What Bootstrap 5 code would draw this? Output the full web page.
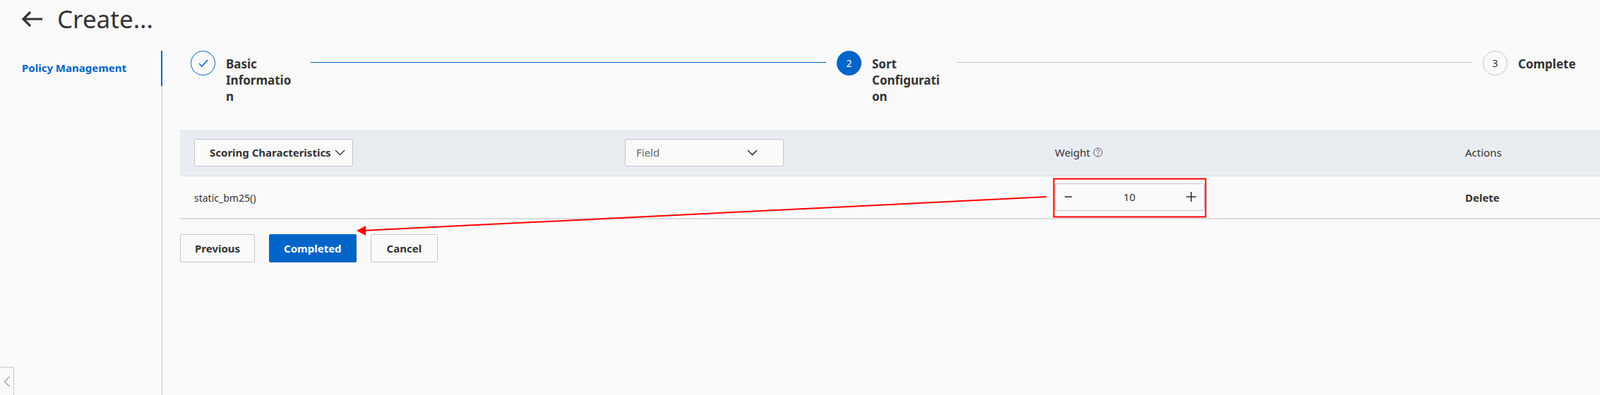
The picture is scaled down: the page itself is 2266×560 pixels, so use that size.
<!DOCTYPE html>
<html lang="en">

<head>
    <meta charset="UTF-8">
    <meta name="viewport" content="width=device-width, initial-scale=1.0">
    <title>Create</title>
    <link href="https://cdn.jsdelivr.net/npm/bootstrap@5.3.0/dist/css/bootstrap.min.css" rel="stylesheet">
    <style>
        html, body { height: 100%; overflow: hidden; }
        body { background: #fafafa; color: #333; font-family: "Noto Sans", "Open Sans", sans-serif; font-size: 15px; }
        .page-wrap { width: 2266px; height: 560px; position: relative; }
        .page-head { height: 72px; padding: 0 0 19px 30px; gap: 21px; }
        .page-head svg { display: block; }
        .page-title { font-size: 35px; line-height: 40px; font-weight: 400; margin: 0; color: #333; }
        .side-menu { width: 230px; height: 488px; border-right: 1px solid #c4c6cf; position: relative; flex: none; padding: 12px 0 0 31px; font-weight: 700; color: #0064c8; line-height: 24px; }
        .side-menu::after { content: ""; position: absolute; right: -1px; top: 0; width: 2px; height: 50px; background: #0064c8; }
        .main-area { flex: 1; min-width: 0; padding-left: 25px; }
        .steps { padding-left: 15px; height: 112px; }
        .step-dot { width: 35px; height: 35px; border-radius: 50%; border: 1px solid #c4c6cf; flex: none; font-size: 14px; }
        .step-done { border-color: #0064c8; color: #0064c8; }
        .step-now { background: #0064c8; border-color: #0064c8; color: #fff; }
        .step-name { width: 100px; margin: 0 20px 0 15px; font-size: 17px; line-height: 23px; font-weight: 700; padding-top: 7px; overflow-wrap: break-word; flex: none; }
        .step-name-last { width: auto; }
        .step-line { width: 730px; height: 1px; background: #c4c6cf; margin-top: 16px; flex: none; }
        .step-line-on { background: #0064c8; }
        .step-gap { margin-right: 15px; }
        .sort-table { width: 2011px; table-layout: fixed; margin: 0; border-collapse: collapse; }
        .sort-table th { background: #e9edf2; font-weight: 400; height: 65px; padding: 0 0 0 20px; vertical-align: middle; border-bottom: 1px solid #dcdfe4; color: #333; }
        .sort-table td { height: 61px; padding: 0 0 0 20px; vertical-align: middle; background: transparent; border-bottom: 2px solid #dcdcdc; color: #333; }
        .sort-table td.cell-text { padding-top: 2px; }
        .fn-name { font-size: 14px; }
        .pick-box { height: 39px; background: #fafafa; border: 1px solid #c4c6cf; border-radius: 2px; font-size: 15px; color: #333; padding: 0; }
        .pick-sort { width: 225px; padding-left: 21px; font-weight: 700; gap: 5px; white-space: nowrap; }
        .pick-field { width: 225px; padding: 0 36px 0 15px; color: #666; justify-content: space-between; }
        .num-box { width: 212px; height: 39px; border: 1px solid #c4c6cf; border-radius: 2px; padding: 0 11px 0 12px; }
        .help-mark { margin-left: 4px; vertical-align: -1px; }
        .btn-row { padding-top: 21px; gap: 20px; }
        .act-btn { height: 40px; border-radius: 2px; font-size: 15px; font-weight: 700; padding: 0 20px; background: #fafafa; border: 1px solid #c4c6cf; color: #333; }
        .act-cancel { padding: 0 22px; }
        .act-primary { background: #0064c8; border-color: #0064c8; color: #fff; }
        .side-toggle { position: absolute; left: 0; bottom: 0; width: 20px; height: 40px; border: 1px solid #c4c6cf; border-left: 0; border-bottom: 0; border-radius: 0 2px 0 0; }
        .mark-layer { position: absolute; left: 0; top: 0; pointer-events: none; }
    </style>
</head>

<body>
    <div class="page-wrap">
        <div class="page-head d-flex align-items-center">
            <svg width="30" height="22" viewBox="0 0 30 22" fill="none" stroke="#333" stroke-width="3.200">
                <path d="M30 11H3M13 1L3 11l10 10" />
            </svg>
            <h1 class="page-title">Create...</h1>
        </div>

        <div class="d-flex">
            <div class="side-menu">Policy Management</div>

            <div class="main-area">
                <div class="steps d-flex">
                    <div class="step-dot step-done d-flex align-items-center justify-content-center">
                        <svg width="14" height="11" viewBox="0 0 14 11" fill="none" stroke="#0064c8" stroke-width="1.6">
                            <path d="M1 6l4 4 8-9" />
                        </svg>
                    </div>
                    <div class="step-name">Basic Information</div>
                    <div class="step-line step-line-on step-gap"></div>
                    <div class="step-dot step-now d-flex align-items-center justify-content-center">2</div>
                    <div class="step-name">Sort Configuration</div>
                    <div class="step-line step-gap"></div>
                    <div class="step-dot d-flex align-items-center justify-content-center">3</div>
                    <div class="step-name step-name-last">Complete</div>
                </div>

                <table class="table sort-table">
                    <colgroup>
                        <col style="width: 610px">
                        <col style="width: 609px">
                        <col style="width: 581px">
                        <col style="width: 211px">
                    </colgroup>
                    <thead>
                        <tr>
                            <th>
                                <button class="pick-box pick-sort d-flex align-items-center" type="button">
                                    Scoring Characteristics
                                    <svg width="15" height="9" viewBox="0 0 15 9" fill="none" stroke="#333" stroke-width="1.4">
                                        <path d="M1 1l6.500 6.500L14 1" />
                                    </svg>
                                </button>
                            </th>
                            <th>
                                <button class="pick-box pick-field d-flex align-items-center" type="button">
                                    Field
                                    <svg width="15" height="9" viewBox="0 0 15 9" fill="none" stroke="#333" stroke-width="1.6">
                                        <path d="M1 1l6.500 6.500L14 1" />
                                    </svg>
                                </button>
                            </th>
                            <th>
                                Weight<svg class="help-mark" width="14" height="14" viewBox="0 0 14 14" fill="none" stroke="#555" stroke-width="1">
                                    <circle cx="7" cy="7" r="6" />
                                    <path d="M5 5.500a2 2 0 1 1 3 1.700c-.7.400-1 .8-1 1.600M7 10v1" />
                                </svg>
                            </th>
                            <th>Actions</th>
                        </tr>
                    </thead>
                    <tbody>
                        <tr>
                            <td class="fn-name cell-text">static_bm25()</td>
                            <td></td>
                            <td>
                                <div class="num-box d-flex align-items-center justify-content-between">
                                    <svg width="12" height="12" viewBox="0 0 12 12" stroke="#333" stroke-width="1.6"><path d="M1 6h10" /></svg>
                                    <span>10</span>
                                    <svg width="14" height="14" viewBox="0 0 14 14" stroke="#333" stroke-width="1.6"><path d="M0 7h14M7 0v14" /></svg>
                                </div>
                            </td>
                            <td class="fw-bold cell-text">Delete</td>
                        </tr>
                    </tbody>
                </table>

                <div class="btn-row d-flex">
                    <button class="btn act-btn" type="button">Previous</button>
                    <button class="btn act-btn act-primary" type="button">Completed</button>
                    <button class="btn act-btn act-cancel" type="button">Cancel</button>
                </div>
            </div>
        </div>

        <div class="side-toggle d-flex align-items-center justify-content-center">
            <svg width="10" height="16" viewBox="0 0 10 16" fill="none" stroke="#9aa0aa" stroke-width="1.4"><path d="M8.500 1L1.500 8l7 7" /></svg>
        </div>

        <!-- red annotation drawn over the screenshot -->
        <svg class="mark-layer" width="2266" height="560" viewBox="0 0 2266 560" fill="none">
            <rect x="1492.500" y="253.500" width="215" height="54" stroke="#f00" stroke-width="2" />
            <path d="M1482 279L512 327" stroke="#f00" stroke-width="2" />
            <path d="M505 327l13-7v14z" fill="#f00" />
        </svg>
    </div>

    <script src="https://cdn.jsdelivr.net/npm/bootstrap@5.3.0/dist/js/bootstrap.bundle.min.js"></script>
</body>

</html>
